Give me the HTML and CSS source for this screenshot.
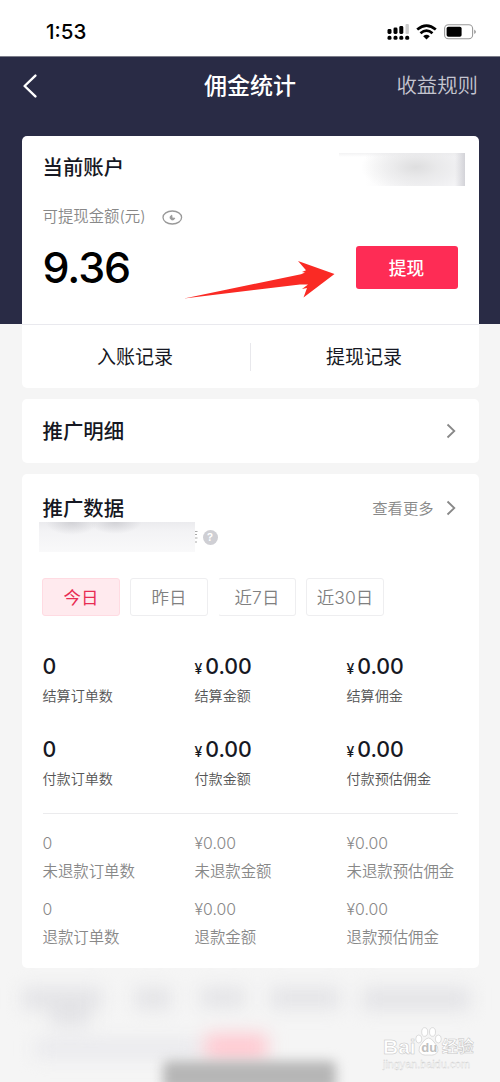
FILE: index.html
```html
<!DOCTYPE html>
<html lang="zh-CN">
<head>
<meta charset="utf-8">
<title>佣金统计</title>
<link rel="stylesheet" href="styles.css">
</head>
<body>
<div class="status">
  <span class="time">1:53</span>
  <div class="status-icons">
    <svg width="23" height="17" viewBox="0 0 23 17"><rect x="0.5" y="5" width="4" height="5" rx="1.4"/><rect x="6.5" y="3.5" width="4" height="6.5" rx="1.4"/><rect x="12.3" y="2" width="4" height="8" rx="1.4"/><rect x="18.5" y="0" width="3.4" height="10" rx="1" fill="#ccc"/><rect x="0.5" y="11.8" width="4" height="4" rx="1.6"/><rect x="6.5" y="11.8" width="4" height="4" rx="1.6"/><rect x="12.3" y="11.8" width="4" height="4" rx="1.6"/><rect x="18.2" y="11.8" width="4" height="4" rx="1.6"/></svg>
    <svg class="wifi" width="21" height="16" viewBox="0 0 21 16"><path d="M1.2 5.6Q10.5-2.4 19.8 5.6M4.5 9.2Q10.5 4 16.5 9.2" fill="none" stroke="#000" stroke-width="2.7"/><path d="M7.2 12.2Q10.5 9.5 13.8 12.2L10.5 15.5Z"/></svg>
    <svg class="battery" width="33" height="16" viewBox="0 0 33 16"><rect x="0.6" y="0.8" width="28" height="14" rx="3.8" fill="#fff" stroke="#999" stroke-width="1.1"/><rect x="2.6" y="2.8" width="15" height="10" rx="1.8"/><path d="M30.3 5.5q3 2.3 0 4.6z" fill="#888"/></svg>
  </div>
</div>
<main class="screen">
  <header class="nav">
    <svg width="16" height="24" viewBox="0 0 16 24"><path d="M13.4 1.6L2.6 12L13.4 22.4" fill="none" stroke="#fff" stroke-width="2.4" stroke-linecap="round" stroke-linejoin="round"/></svg>
    <h1>佣金统计</h1>
    <span class="rules">收益规则</span>
  </header>
  <section class="card account">
    <div class="account-body">
      <h2>当前账户</h2>
      <div class="caption">可提现金额(元)
        <svg width="21" height="15" viewBox="0 0 21 15" fill="none" stroke="#999"><ellipse cx="10.3" cy="7.5" rx="9.3" ry="6.5" stroke-width="1.3"/><path d="M9.8 5.2a2.4 2.4 0 1 0 3 3H10z" fill="#999" stroke-width="1"/></svg>
      </div>
      <div class="balance"><span class="amount">9.36</span><span class="withdraw">提现</span></div>
    </div>
    <div class="records"><span>入账记录</span><i></i><span>提现记录</span></div>
    <div class="redacted-user"></div>
    <svg class="arrow" width="152" height="38" viewBox="0 0 152 38"><path d="M0 37.5L117 13.2L121 11.5L118 11L122 9.3L114 0L150.5 13L119.5 36.5L123 27L118 28L124 23.5L116 23.5Z" fill="#fa2a24"/></svg>
  </section>
  <section class="card details">
    <h2>推广明细</h2>
    <svg width="10" height="16" viewBox="0 0 10 16"><path d="M1.5 1.5L8.3 8L1.5 14.5" fill="none" stroke="#888" stroke-width="1.8"/></svg>
  </section>
  <section class="card data">
    <div class="data-head"><h2>推广数据</h2><span class="more"><span>查看更多</span><svg width="10" height="16" viewBox="0 0 10 16"><path d="M1.5 1.5L8.3 8L1.5 14.5" fill="none" stroke="#888" stroke-width="1.8"/></svg></span></div>
    <div class="note"><span class="redacted-note"></span><svg class="scrap" width="3" height="14" viewBox="0 0 3 14"><path d="M0 1.5H2.5M0 4.5H2M0 8H2.5M0 12H2" stroke="#aaa" stroke-width="1.2"/></svg><span class="help">?</span></div>
    <div class="tabs"><span class="tab active">今日</span><span class="tab">昨日</span><span class="tab open">近7日</span><span class="tab">近30日</span></div>
    <div class="metrics">
      <div><b>0</b><span>结算订单数</span></div>
      <div><b><small>¥</small>0.00</b><span>结算金额</span></div>
      <div><b><small>¥</small>0.00</b><span>结算佣金</span></div>
      <div><b>0</b><span>付款订单数</span></div>
      <div><b><small>¥</small>0.00</b><span>付款金额</span></div>
      <div><b><small>¥</small>0.00</b><span>付款预估佣金</span></div>
    </div>
    <div class="refunds">
      <div><b>0</b><span>未退款订单数</span></div>
      <div><b>¥0.00</b><span>未退款金额</span></div>
      <div><b>¥0.00</b><span>未退款预估佣金</span></div>
      <div><b>0</b><span>退款订单数</span></div>
      <div><b>¥0.00</b><span>退款金额</span></div>
      <div><b>¥0.00</b><span>退款预估佣金</span></div>
    </div>
  </section>
  <footer class="footer">
    <svg class="haze" width="500" height="114" viewBox="0 0 500 114">
      <defs><filter id="soft" x="-30%" y="-100%" width="160%" height="300%" color-interpolation-filters="sRGB"><feGaussianBlur stdDeviation="9"/></filter><filter id="bar" x="-10%" y="-100%" width="120%" height="300%" color-interpolation-filters="sRGB"><feGaussianBlur stdDeviation="6"/></filter></defs>
      <g filter="url(#soft)" fill="#e3e3e6"><rect x="22" y="20" width="80" height="21"/><rect x="135" y="20" width="36" height="21"/><rect x="200" y="20" width="45" height="19"/><rect x="270" y="20" width="70" height="20"/><rect x="362" y="20" width="108" height="22"/><rect x="50" y="38" width="40" height="20"/><rect x="35" y="72" width="165" height="17" fill="#e8e8ec"/><rect x="205" y="66" width="62" height="26" fill="#ffc8d0"/></g>
      <rect x="163" y="93" width="173" height="30" rx="5" fill="#b6b6b6" filter="url(#bar)"/>
    </svg>
    <div class="watermark">
      <div class="brand"><span>Bai</span><svg width="27" height="29" viewBox="0 0 27 29"><g fill="#fff" stroke="#cfcfcf" stroke-width=".7"><ellipse cx="3.8" cy="12" rx="3" ry="4"/><ellipse cx="9.7" cy="5" rx="3" ry="4.3"/><ellipse cx="17.5" cy="5" rx="3" ry="4.3"/><ellipse cx="23.3" cy="12" rx="3" ry="4"/><path d="M8 15Q13.5 7 19 15Q24 20 23 24Q21 29 13.5 28Q6 29 4 24Q3 20 8 15Z"/></g><text x="6.3" y="25" font-size="13" class="du">du</text></svg><span class="jingyan">经验</span></div>
      <div class="site">jingyan.baidu.com</div>
    </div>
  </footer>
</main>
</body>
</html>
```
FILE: styles.css
```css
* { box-sizing: border-box; }
body { margin: 0; width: 500px; height: 1082px; overflow: hidden; background: #fff; font-family: Inter, "Noto Sans CJK SC", sans-serif; color: #161823; }
h1, h2 { margin: 0; }
svg { display: block; flex: none; }
.status { height: 56px; display: flex; justify-content: space-between; align-items: center; padding: 8px 23px 0 46px; }
.time { font-size: 20.5px; font-weight: 550; line-height: 24px; color: #000; }
.status-icons { display: flex; align-items: center; }
.wifi { margin-left: 6px; }
.battery { margin-left: 7px; }
.screen { height: 1026px; background: linear-gradient(#292b45 0 267px, #f5f5f5 267px); border-top: 1px solid #7c7d8a; }
.nav { height: 79px; display: grid; grid-template-columns: 1fr auto 1fr; align-items: center; padding: 0 22px 22px; }
.nav h1 { font-size: 23px; font-weight: 500; color: #fff; line-height: 30px; }
.rules { justify-self: end; font-size: 20.4px; font-weight: 350; line-height: 24px; color: #c5c5d0; }
.card { margin: 0 21.5px 11px; background: #fff; border-radius: 5px; }
h2 { font-size: 20.4px; font-weight: 500; line-height: 30px; }
.account { height: 252px; position: relative; }
.account-body { height: 189px; padding: 17px 21px 0; border-bottom: 1px solid #e9e9ee; }
.caption { display: flex; align-items: center; gap: 16px; margin-top: 24px; line-height: 20px; font-size: 15.4px; font-weight: 350; color: #888; }
.balance { display: flex; justify-content: space-between; align-items: center; height: 44px; margin-top: 18px; }
.amount { font-size: 43px; font-weight: 450; letter-spacing: -1.1px; line-height: 44px; color: #000; }
.withdraw { width: 102px; height: 43px; border-radius: 3px; background: #fe2c55; color: #fff; font-size: 17.7px; font-weight: 500; line-height: 45px; text-align: center; }
.records { height: 63px; display: grid; grid-template-columns: 1fr 1px 1fr; align-items: center; text-align: center; font-size: 19px; font-weight: 400; line-height: 26px; }
.records i { height: 28px; background: #e8e8ec; }
.records span { padding: 2px 1px 0 0; }
.redacted-user { position: absolute; right: 13.5px; top: 17px; width: 126px; height: 33px; background: linear-gradient(90deg, transparent 92%, #d3d3d8), linear-gradient(#e8e8ea88, transparent 4px), radial-gradient(ellipse 55px 26px at 61% 43%, #dededf, #e4e4e5aa 40%, transparent), linear-gradient(90deg, transparent 20%, #f4f4f6 60%); }
.arrow { position: absolute; left: 162px; top: 125px; }
.details { height: 64px; display: flex; justify-content: space-between; align-items: center; padding: 2px 23px 0 21px; }
.details svg { margin-bottom: 2px; }
.data { height: 494px; margin-bottom: 0; padding: 20px 21px 0; }
.data-head { display: flex; justify-content: space-between; height: 28px; }
.more { display: flex; align-items: center; gap: 12px; padding-right: 2px; font-size: 15.3px; line-height: 20px; font-weight: 350; color: #888; }
.more span { padding-top: 1px; }
.note { display: flex; align-items: center; height: 30px; margin: 0 0 26px -4px; }
.redacted-note { width: 156px; height: 30px; background: radial-gradient(ellipse 26px 13px at 21% 0, #c4c4c9aa, transparent), radial-gradient(ellipse 26px 12px at 49% 0, #c4c4c9aa, transparent), linear-gradient(#ebebee, #f3f3f5 30%, #f9f9fa); }
.scrap { margin-right: 5px; }
.help { width: 15px; height: 15px; border-radius: 50%; background: #cfcfd4; color: #fff; font-size: 11px; font-weight: 600; line-height: 15px; text-align: center; }
.tabs { display: flex; gap: 10px; margin-left: -.5px; }
.tab { width: 78px; height: 38px; border: 1px solid #eeeef0; border-radius: 3px; color: #808080; font-size: 17.5px; font-weight: 350; line-height: 38px; text-align: center; }
.tab.active { background: #ffeaee; border-color: #ffdbe2; color: #e82c52; font-weight: 400; }
.tab.open { border-left-color: transparent; }
.metrics, .refunds { display: grid; grid-template-columns: 152px 152px 1fr; white-space: nowrap; }
.metrics { margin-top: 35px; row-gap: 28px; padding-bottom: 24px; border-bottom: 1px solid #ebebed; }
.metrics b, .metrics span, .refunds b, .refunds span { display: block; }
.metrics b { height: 30px; font-size: 21.3px; font-weight: 500; line-height: 30px; }
.metrics small { font-size: 14px; line-height: 1; margin-right: 3px; }
.metrics span { margin-top: 4px; font-size: 14.1px; font-weight: 350; line-height: 21px; color: #555; }
.refunds { margin-top: 20px; row-gap: 18px; color: #888; }
.refunds b { height: 20px; font-size: 15.8px; font-weight: 350; line-height: 20px; }
.refunds span { margin-top: 8px; font-size: 15.4px; font-weight: 350; line-height: 20px; }
.footer { position: relative; height: 114px; overflow: hidden; }
.haze { position: absolute; left: 0; top: 0; }
.watermark { position: absolute; left: 383px; top: 59px; color: #fff; -webkit-text-stroke: .5px #c4c4c4; }
.brand { display: flex; align-items: flex-end; height: 29px; font: 700 21px/19px "Liberation Sans", "Noto Sans CJK SC", sans-serif; }
.brand svg { margin: 0 0 0 -1px; }
.jingyan { font-size: 16px; }
.du { fill: #c0c0c0; stroke: none; -webkit-text-stroke: 0; }
.site { margin-top: 1px; font: 10.8px/14px "Liberation Sans", sans-serif; -webkit-text-stroke: .3px #ccc; }
```
